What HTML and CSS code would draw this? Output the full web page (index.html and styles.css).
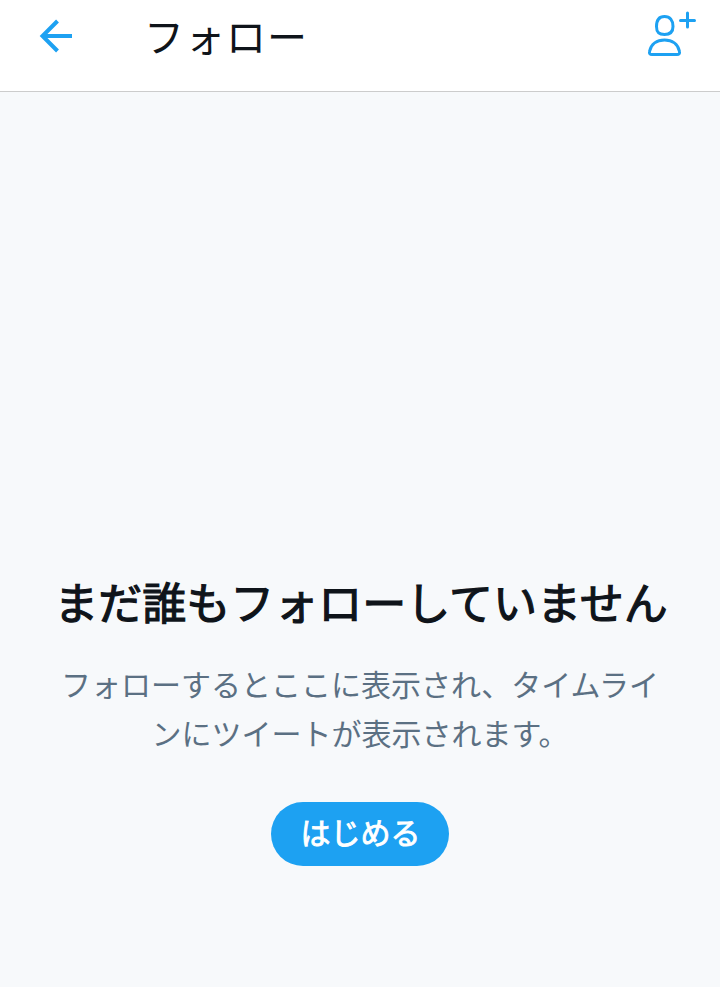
FILE: index.html
```html
<!DOCTYPE html>
<html lang="ja">
<head>
<meta charset="utf-8">
<title>フォロー</title>
<link rel="stylesheet" href="styles.css">
</head>
<body>
<header class="bar">
  <svg class="back" viewBox="0 0 34 34"><path d="M33 17H4M18.500 2L3.500 17L18.500 32"/></svg>
  <h1 class="title">フォロー</h1>
  <svg class="add" viewBox="0 0 50 46"><path d="M17.500 5.500C23 5.500 26 9.500 26 15.500C26 21 23.500 23.500 17.500 23.500S9.500 21 9.500 15.500C9.500 9.500 12 5.500 17.500 5.500ZM5 43.500C3 43.500 2 42.500 2.500 40.500C4 33 10 29 17.500 29S31 33 32.500 40.500C33 42.500 32 43.500 30 43.500ZM40.500 2V16M33.500 9.500H47.500"/></svg>
</header>
<main class="empty">
  <h2 class="heading">まだ誰もフォローしていません</h2>
  <p class="text">フォローするとここに表示され、タイムラインにツイートが表示されます。</p>
  <button class="start">はじめる</button>
</main>
</body>
</html>
```

FILE: styles.css
```css
* { box-sizing: border-box; margin: 0; }
body {
  height: 987px;
  display: flex;
  flex-direction: column;
  background: #f7f9fb;
  font-family: "Noto Sans CJK JP", sans-serif;
}
.bar {
  height: 92px;
  display: flex;
  align-items: flex-start;
  padding: 0 23px 0 39px;
  background: #fff;
  border-bottom: 1px solid #ccc;
}
.back, .add { fill: none; stroke: #1da1f2; flex: none; }
.back { width: 34px; height: 34px; margin-top: 19px; stroke-width: 4; }
.add { width: 50px; height: 46px; margin: 11px 0 0 auto; stroke-width: 3; stroke-linecap: round; }
.title {
  margin: 6px 0 0 71px;
  font-size: 40px;
  line-height: 58px;
  letter-spacing: 1px;
  font-weight: 400;
  color: #0f141a;
}
.empty {
  display: flex;
  flex-direction: column;
  align-items: center;
  padding-top: 477px;
}
.heading {
  padding-left: 2px;
  font-size: 44px;
  line-height: 64px;
  font-weight: 400;
  -webkit-text-stroke: 1.2px #0f141a;
  color: #0f141a;
  white-space: nowrap;
}
.text {
  width: 600px;
  margin-top: 26px;
  font-size: 30px;
  line-height: 49px;
  color: #5b7083;
  text-align: center;
}
.start {
  width: 178px;
  height: 64px;
  margin-top: 45px;
  padding: 0 0 5px 1px;
  border: 0;
  border-radius: 32px;
  background: #1da1f2;
  color: #fff;
  font: 400 30px/59px "Noto Sans CJK JP", sans-serif;
  -webkit-text-stroke: 0.9px #fff;
}
```
